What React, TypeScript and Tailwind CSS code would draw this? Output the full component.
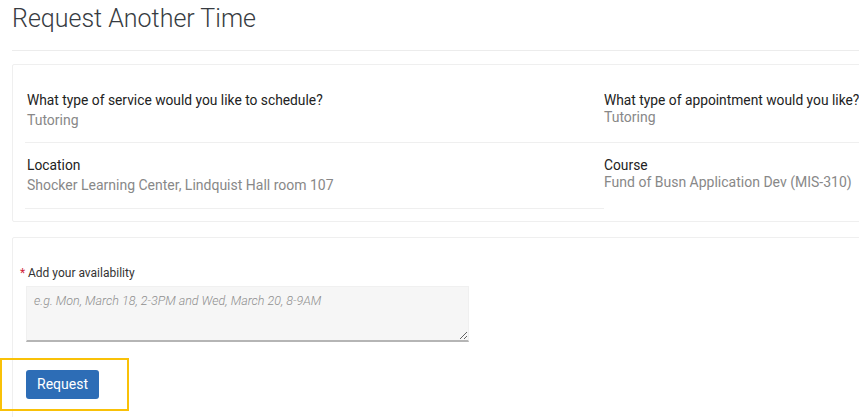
import React from 'react';

interface FieldProps {
  label: string;
  value: string;
  tight?: boolean;
}

function Field({ label, value, tight }: FieldProps) {
  return (
    <div>
      <div className="text-[13.8px] leading-[20px] text-[#222] whitespace-nowrap">{label}</div>
      <div className={`text-[14px] text-[#888] ${tight ? 'leading-[14px]' : 'leading-[20px]'}`}>{value}</div>
    </div>
  );
}

export default function App() {
  return (
    <div className="relative w-[859px] h-[417px] overflow-hidden bg-white font-['Roboto',sans-serif]">
      <div className="w-[1200px] px-3">
        <h1 className="text-[25px] font-light leading-[36px] text-[#373c42] pt-[1px] pb-[13px] border-b border-[#ececec]">
          Request Another Time
        </h1>

        <div className="mt-[13px] border border-[#efefef] rounded-[2px] px-3 pt-[25px] pb-[12px]">
          <div className="grid grid-cols-[579px_580px] border-b border-[#efefef] pb-[12px]">
            <div className="pl-[2px]">
              <Field label="What type of service would you like to schedule?" value="Tutoring" />
            </div>
            <Field label="What type of appointment would you like?" value="Tutoring" tight />
          </div>
          <div className="grid grid-cols-[579px_580px]">
            <div className="border-b border-[#efefef] pt-[12px] pb-[13px] pl-[2px]">
              <Field label="Location" value="Shocker Learning Center, Lindquist Hall room 107" />
            </div>
            <div className="pt-[12px]">
              <Field label="Course" value="Fund of Busn Application Dev (MIS-310)" tight />
            </div>
          </div>
        </div>

        <div className="mt-[15px] border border-[#efefef] rounded-[2px] px-3 pt-[26px] h-[300px]">
          <div className="flex items-center text-[12px] leading-[18px] text-[#333]">
            <span className="text-[#d0243c] text-[12px] w-[7px] -ml-[5px] mr-[1px]">*</span>
            <span>Add your availability</span>
          </div>
          <textarea
            placeholder="e.g. Mon, March 18, 2-3PM and Wed, March 20, 8-9AM"
            className="block mt-[4px] ml-[1px] w-[443px] h-[56px] bg-[#f6f6f6] border border-[#f0f0f0] border-b-2 border-b-[#b5b5b5] px-[7px] py-[5px] text-[12.5px] italic font-light text-[#555] placeholder:text-[#8f8f8f] outline-none resize-y"
          />
          <button className="mt-[28px] ml-[1px] w-[73px] h-[29px] rounded-[3px] bg-[#2d6db6] text-white text-[14px]">
            Request
          </button>
        </div>
      </div>

      <div className="absolute left-0 top-[358px] w-[129px] h-[53px] border-2 border-[#f9c108]"></div>
    </div>
  );
}
